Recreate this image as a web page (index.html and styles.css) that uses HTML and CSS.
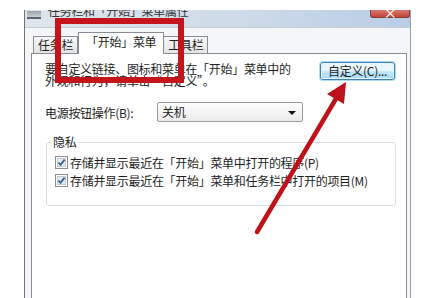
FILE: index.html
```html
<!DOCTYPE html>
<html lang="zh-CN">

<head>
	<meta charset="UTF-8">
	<title>任务栏和「开始」菜单属性</title>
	<link rel="stylesheet" href="styles.css">
</head>

<body>
	<div class="window">
		<div class="titlebar">
			<span class="app-icon"></span>
			<span class="title">任务栏和「开始」菜单属性</span>
			<span class="close-btn">×</span>
		</div>
		<div class="client">
			<div class="tabs">
				<div class="tab">任务栏</div>
				<div class="tab active">「开始」菜单</div>
				<div class="tab">工具栏</div>
			</div>
			<div class="panel">
				<div class="intro">
					<p>要自定义链接、图标和菜单在「开始」菜单中的<br>外观和行为，请单击“自定义”。</p>
					<button class="btn" type="button">自定义(C)...</button>
				</div>
				<div class="power">
					<span class="power-label">电源按钮操作(B):</span>
					<div class="select">关机<i class="caret"></i></div>
				</div>
				<fieldset class="group">
					<legend>隐私</legend>
					<label class="check">
						<svg class="box" width="13" height="13" viewBox="0 0 13 13">
							<rect x="0.5" y="0.5" width="12" height="12" fill="#fff" stroke="#8e8f8f" />
							<rect x="2.5" y="2.5" width="8" height="8" fill="#e4ecf4" stroke="#c2cbd5" />
							<path d="M3.5 6.5 L5.5 8.8 L9.6 3.6" fill="none" stroke="#3a5f9c" stroke-width="1.8" />
						</svg>
						存储并显示最近在「开始」菜单中打开的程序(P)
					</label>
					<label class="check">
						<svg class="box" width="13" height="13" viewBox="0 0 13 13">
							<rect x="0.5" y="0.5" width="12" height="12" fill="#fff" stroke="#8e8f8f" />
							<rect x="2.5" y="2.5" width="8" height="8" fill="#e4ecf4" stroke="#c2cbd5" />
							<path d="M3.5 6.5 L5.5 8.8 L9.6 3.6" fill="none" stroke="#3a5f9c" stroke-width="1.8" />
						</svg>
						存储并显示最近在「开始」菜单和任务栏中打开的项目(M)
					</label>
				</fieldset>
			</div>
		</div>
	</div>

	<!-- 标注 -->
	<div class="mark-box"></div>
	<svg class="mark-arrow" width="427" height="298" viewBox="0 0 427 298">
		<line x1="257" y1="232" x2="337" y2="97" stroke="#bf1119" stroke-width="4.5" stroke-linecap="round" />
		<polygon points="346,82 327,94 344,104" fill="#bf1119" />
	</svg>
</body>

</html>
```

FILE: styles.css
```css
* {
	margin: 0;
	padding: 0;
	box-sizing: border-box;
}

body {
	position: relative;
	height: 298px;
	overflow: hidden;
	background: #fff;
	font-family: "Noto Sans CJK SC", "DejaVu Sans", sans-serif;
	font-size: 12px;
	letter-spacing: -0.3px;
	color: #1e1e1e;
}

.window {
	width: 387px;
	height: 300px;
	margin: 10px 0 0 24px;
	border-left: 1px solid #6f737a;
	border-right: 1px solid #9aa0a8;
	background: #eef1f5;
}

.titlebar {
	display: flex;
	align-items: flex-start;
	height: 18px;
	overflow: hidden;
	background: linear-gradient(to right, #dfe5ec, #cfdbe9 55%, #b8cde6);
	border-bottom: 1px solid #c5ccd4;
}

.app-icon {
	width: 14px;
	height: 8px;
	margin: 1px 0 0 2px;
	background: linear-gradient(#9aa1a8, #c9ced3);
	border-bottom: 2px solid #5d6670;
}

.title {
	margin: -5px 0 0 7px;
	line-height: 12px;
	color: #333;
}

.close-btn {
	width: 40px;
	height: 8px;
	margin-left: auto;
	line-height: 4px;
	text-align: center;
	font-size: 14px;
	color: #fff;
	background: linear-gradient(#d87a6e, #c2453a);
	border: 1px solid #8a3a32;
	border-top: none;
	border-radius: 0 0 3px 3px;
}

.client {
	display: flex;
	flex-direction: column;
	height: 282px;
	padding: 4px 3px 0 6px;
	background: #f5f6f7;
}

.tabs {
	display: flex;
	align-items: flex-end;
	height: 22px;
	margin: 0 0 -1px 2px;
}

.tab {
	height: 17px;
	margin-bottom: 1px;
	padding: 0 4px;
	line-height: 16px;
	white-space: nowrap;
	border: 1px solid #898c95;
	border-bottom: none;
	background: linear-gradient(#f8f8f8, #e4e4e4);
}

.tab+.tab {
	border-left: none;
}

.tab.active {
	position: relative;
	z-index: 1;
	height: 22px;
	margin-bottom: 0;
	padding: 0 7px;
	line-height: 18px;
	border-left: 1px solid #898c95;
	background: #fff;
}

.tab.active+.tab {
	border-left: none;
}

.panel {
	flex: 1;
	padding: 8px 10px 0 13px;
	border: 1px solid #898c95;
	background: #fff;
}

.intro {
	display: flex;
	justify-content: space-between;
	align-items: flex-start;
}

.intro p {
	margin-top: 1px;
	line-height: 12px;
}

.btn {
	width: 75px;
	height: 18px;
	margin-right: 1px;
	font-family: inherit;
	font-size: 12px;
	letter-spacing: -0.3px;
	line-height: 14px;
	color: #1e1e1e;
	border: 1px solid #3c7fb1;
	border-radius: 3px;
	background: linear-gradient(#eaf6fd 45%, #bee6fd 55%, #a7d9f5);
	box-shadow: 0 0 0 1px #a9dcf6, inset 0 0 0 1px #e8f6fd;
}

.power {
	display: flex;
	align-items: center;
	margin-top: 15px;
}

.power-label {
	width: 112px;
}

.select {
	position: relative;
	width: 146px;
	height: 20px;
	padding-left: 4px;
	line-height: 18px;
	border: 1px solid #9a9a9a;
	border-radius: 2px;
	background: linear-gradient(#fdfdfd, #ebebeb);
}

.caret {
	position: absolute;
	top: 8px;
	right: 6px;
	border-top: 4px solid #111;
	border-left: 4px solid transparent;
	border-right: 4px solid transparent;
}

.group {
	height: 70px;
	margin: 14px 0 0 1px;
	padding: 5px 8px 0 8px;
	border: 1px solid #d5dfe5;
	border-radius: 3px;
}

.group legend {
	margin-left: -4px;
	padding: 0 2px;
	line-height: 12px;
}

.check {
	display: flex;
	align-items: center;
	height: 18px;
	white-space: nowrap;
}

.box {
	flex: none;
	margin-right: 2px;
}

.mark-box {
	position: absolute;
	top: 18px;
	left: 55px;
	width: 129px;
	height: 65px;
	border: 6px solid #c4141c;
}

.mark-arrow {
	position: absolute;
	top: 0;
	left: 0;
	pointer-events: none;
}
```
